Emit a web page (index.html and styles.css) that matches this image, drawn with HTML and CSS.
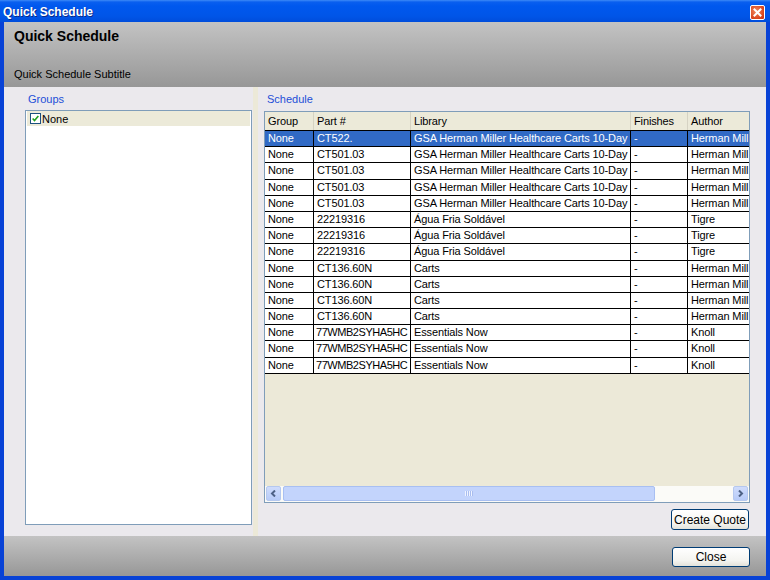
FILE: index.html
```html
<!DOCTYPE html>
<html>
<head>
<meta charset="utf-8">
<link rel="stylesheet" href="styles.css">
</head>
<body>
<div class="window">
  <div class="titlebar">
    <span class="title">Quick Schedule</span>
    <span class="xbtn"><svg width="13" height="13" viewBox="0 0 13 13"><path d="M3.5 3.5 L9.5 9.5 M9.5 3.5 L3.5 9.5" stroke="#fff" stroke-width="2" stroke-linecap="square"/></svg></span>
  </div>
  <div class="client">
    <div class="header">
      <div class="h-title">Quick Schedule</div>
      <div class="h-sub">Quick Schedule Subtitle</div>
    </div>
    <div class="content">
      <div class="left">
        <div class="label">Groups</div>
        <div class="groups">
          <div class="grow"><span class="chk"><svg width="11" height="11" viewBox="0 0 11 11"><path d="M2 5.5 L4.3 8 L9 2.5" fill="none" stroke="#21a121" stroke-width="2"/></svg></span>None</div>
        </div>
      </div>
      <div class="splitter"></div>
      <div class="right">
        <div class="label">Schedule</div>
        <div class="table">
          <div class="tview">
            <div class="row head">
              <div class="c c1">Group</div><div class="c c2">Part #</div><div class="c c3">Library</div><div class="c c4">Finishes</div><div class="c c5">Author</div>
            </div>
            <div class="row sel"><div class="c c1">None</div><div class="c c2">CT522.</div><div class="c c3">GSA Herman Miller Healthcare Carts 10-Day</div><div class="c c4">-</div><div class="c c5">Herman Mill</div></div>
            <div class="row"><div class="c c1">None</div><div class="c c2">CT501.03</div><div class="c c3">GSA Herman Miller Healthcare Carts 10-Day</div><div class="c c4">-</div><div class="c c5">Herman Mill</div></div>
            <div class="row"><div class="c c1">None</div><div class="c c2">CT501.03</div><div class="c c3">GSA Herman Miller Healthcare Carts 10-Day</div><div class="c c4">-</div><div class="c c5">Herman Mill</div></div>
            <div class="row"><div class="c c1">None</div><div class="c c2">CT501.03</div><div class="c c3">GSA Herman Miller Healthcare Carts 10-Day</div><div class="c c4">-</div><div class="c c5">Herman Mill</div></div>
            <div class="row"><div class="c c1">None</div><div class="c c2">CT501.03</div><div class="c c3">GSA Herman Miller Healthcare Carts 10-Day</div><div class="c c4">-</div><div class="c c5">Herman Mill</div></div>
            <div class="row"><div class="c c1">None</div><div class="c c2">22219316</div><div class="c c3">Água Fria Soldável</div><div class="c c4">-</div><div class="c c5">Tigre</div></div>
            <div class="row"><div class="c c1">None</div><div class="c c2">22219316</div><div class="c c3">Água Fria Soldável</div><div class="c c4">-</div><div class="c c5">Tigre</div></div>
            <div class="row"><div class="c c1">None</div><div class="c c2">22219316</div><div class="c c3">Água Fria Soldável</div><div class="c c4">-</div><div class="c c5">Tigre</div></div>
            <div class="row"><div class="c c1">None</div><div class="c c2">CT136.60N</div><div class="c c3">Carts</div><div class="c c4">-</div><div class="c c5">Herman Mill</div></div>
            <div class="row"><div class="c c1">None</div><div class="c c2">CT136.60N</div><div class="c c3">Carts</div><div class="c c4">-</div><div class="c c5">Herman Mill</div></div>
            <div class="row"><div class="c c1">None</div><div class="c c2">CT136.60N</div><div class="c c3">Carts</div><div class="c c4">-</div><div class="c c5">Herman Mill</div></div>
            <div class="row"><div class="c c1">None</div><div class="c c2">CT136.60N</div><div class="c c3">Carts</div><div class="c c4">-</div><div class="c c5">Herman Mill</div></div>
            <div class="row"><div class="c c1">None</div><div class="c c2 tight">77WMB2SYHA5HC</div><div class="c c3">Essentials Now</div><div class="c c4">-</div><div class="c c5">Knoll</div></div>
            <div class="row"><div class="c c1">None</div><div class="c c2 tight">77WMB2SYHA5HC</div><div class="c c3">Essentials Now</div><div class="c c4">-</div><div class="c c5">Knoll</div></div>
            <div class="row"><div class="c c1">None</div><div class="c c2 tight">77WMB2SYHA5HC</div><div class="c c3">Essentials Now</div><div class="c c4">-</div><div class="c c5">Knoll</div></div>
          </div>
          <div class="hscroll">
            <div class="sbtn"><svg width="7" height="7" viewBox="0 0 7 7"><path d="M5 0.5 L2 3.5 L5 6.5" fill="none" stroke="#4d6185" stroke-width="2"/></svg></div>
            <div class="thumb"><span class="grip"></span></div>
            <div class="track"></div>
            <div class="sbtn"><svg width="7" height="7" viewBox="0 0 7 7"><path d="M2 0.5 L5 3.5 L2 6.5" fill="none" stroke="#4d6185" stroke-width="2"/></svg></div>
          </div>
        </div>
        <div class="btnrow"><button class="btn quote">Create Quote</button></div>
      </div>
    </div>
    <div class="footer">
      <button class="btn close">Close</button>
    </div>
  </div>
</div>
</body>
</html>
```

FILE: styles.css
```css
html, body {
  margin: 0;
  padding: 0;
}
body {
  width: 770px;
  height: 580px;
  overflow: hidden;
  font-family: "Liberation Sans", Arial, sans-serif;
  font-size: 11px;
}
.window {
  width: 770px;
  height: 580px;
  display: flex;
  flex-direction: column;
  background: #0842d6;
}
.titlebar {
  height: 22px;
  flex-shrink: 0;
  display: flex;
  align-items: center;
  justify-content: space-between;
  padding: 0 5px 0 3px;
  background: linear-gradient(#3d8af7 0px, #0a5fef 2px, #0058ee 6px, #0055e8 16px, #004ddb 22px);
  color: #fff;
}
.title {
  font-weight: bold;
  font-size: 12px;
  text-shadow: 1px 1px 0 #0a2a8a;
  margin-top: 2px;
}
.xbtn {
  width: 13px;
  height: 13px;
  border: 1px solid #fff;
  border-radius: 2px;
  background: radial-gradient(circle at 40% 40%, #f08a60, #d9441c 70%, #c0331a);
  display: flex;
  margin-top: 2px;
}
.client {
  flex: 1;
  min-height: 0;
  margin: 0 4px 4px 4px;
  display: flex;
  flex-direction: column;
  background: #ebe9ed;
}
.header {
  height: 65px;
  flex-shrink: 0;
  box-sizing: border-box;
  padding: 6px 10px 7px 10px;
  background: linear-gradient(#c3c3c3, #979797);
  display: flex;
  flex-direction: column;
  justify-content: space-between;
}
.h-title {
  font-weight: bold;
  font-size: 14px;
  color: #000;
}
.h-sub {
  font-size: 11px;
  color: #000;
}
.content {
  flex: 1;
  min-height: 0;
  display: flex;
}
.left {
  width: 249px;
  flex-shrink: 0;
  box-sizing: border-box;
  padding: 6px 1px 11px 21px;
  display: flex;
  flex-direction: column;
}
.label {
  color: #1d4fd8;
  height: 13px;
  line-height: 13px;
  padding-left: 3px;
  margin-bottom: 4px;
}
.groups {
  flex: 1;
  background: #fff;
  border: 1px solid #7f9db9;
}
.grow {
  height: 15px;
  margin: 0 1px;
  background: #ecead9;
  display: flex;
  align-items: center;
}
.chk {
  width: 11px;
  height: 11px;
  border: 1px solid #1c5180;
  background: #fff;
  margin-left: 3px;
  margin-right: 1px;
  box-sizing: border-box;
  display: flex;
  align-items: center;
  justify-content: center;
}
.chk svg { width: 9px; height: 9px; }
.splitter {
  width: 5px;
  flex-shrink: 0;
  background: #ece9d8;
}
.right {
  flex: 1;
  min-width: 0;
  box-sizing: border-box;
  padding: 6px 16px 6px 6px;
  display: flex;
  flex-direction: column;
}
.right .label { margin-bottom: 5px; }
.table {
  flex: 1;
  min-height: 0;
  min-width: 0;
  border: 1px solid #7f9db9;
  background: #ece9d8;
  display: flex;
  flex-direction: column;
  overflow: hidden;
}
.tview {
  flex: 1;
  min-height: 0;
  overflow: hidden;
}
.row {
  display: flex;
  width: 485px;
  height: 16.2px;
  background: #fff;
  border-bottom: 1px solid #000;
  box-sizing: border-box;
  letter-spacing: -0.12px;
}
.row.head {
  height: 19px;
  background: #ecead9;
  border-bottom: 1px solid #000;
}
.c {
  flex-shrink: 0;
  box-sizing: border-box;
  padding-left: 3px;
  white-space: nowrap;
  overflow: hidden;
  border-right: 1px solid #000;
  line-height: 15px;
  color: #000;
}
.c.tight { letter-spacing: -0.45px; padding-left: 2px; }
.head .c {
  border-right: 1px solid #d6d3c3;
  line-height: 18px;
}
.c1 { width: 49px; }
.c2 { width: 97px; }
.c3 { width: 220px; }
.c4 { width: 57px; }
.c5 { width: 62px; border-right: none; }
.row.sel { background: #316ac5; }
.row.sel .c { color: #fff; }
.hscroll {
  height: 16px;
  flex-shrink: 0;
  display: flex;
  background: #fbfbf8;
  padding: 0 1px;
}
.sbtn {
  width: 15px;
  height: 15px;
  flex-shrink: 0;
  box-sizing: border-box;
  border: 1px solid #b5c8ef;
  border-radius: 2px;
  background: linear-gradient(#cfdcfc, #b7cbf8);
  display: flex;
  align-items: center;
  justify-content: center;
}
.thumb {
  width: 372px;
  flex-shrink: 0;
  margin-left: 2px;
  height: 15px;
  box-sizing: border-box;
  border: 1px solid #a8bff2;
  border-radius: 2px;
  background: #c3d4fc;
  display: flex;
  align-items: center;
  justify-content: center;
}
.grip {
  width: 8px;
  height: 5px;
  background: repeating-linear-gradient(90deg, #eef3ff 0 1px, #a9bdef 1px 2px);
}
.track { flex: 1; }
.btnrow {
  display: flex;
  justify-content: flex-end;
  margin-top: 6px;
  margin-right: 1px;
}
.btn {
  font-family: "Liberation Sans", Arial, sans-serif;
  font-size: 12px;
  color: #000;
  background: linear-gradient(#fff, #f4f4f0 70%, #e3e2da);
  border: 1px solid #003c74;
  border-radius: 3px;
  padding: 0;
  height: 21px;
}
.quote { width: 78px; }
.footer {
  height: 40px;
  flex-shrink: 0;
  box-sizing: border-box;
  background: linear-gradient(#c3c3c3, #979797);
  display: flex;
  justify-content: flex-end;
  align-items: flex-start;
  padding: 11px 16px 0 0;
}
.close { width: 78px; height: 20px; }
```
